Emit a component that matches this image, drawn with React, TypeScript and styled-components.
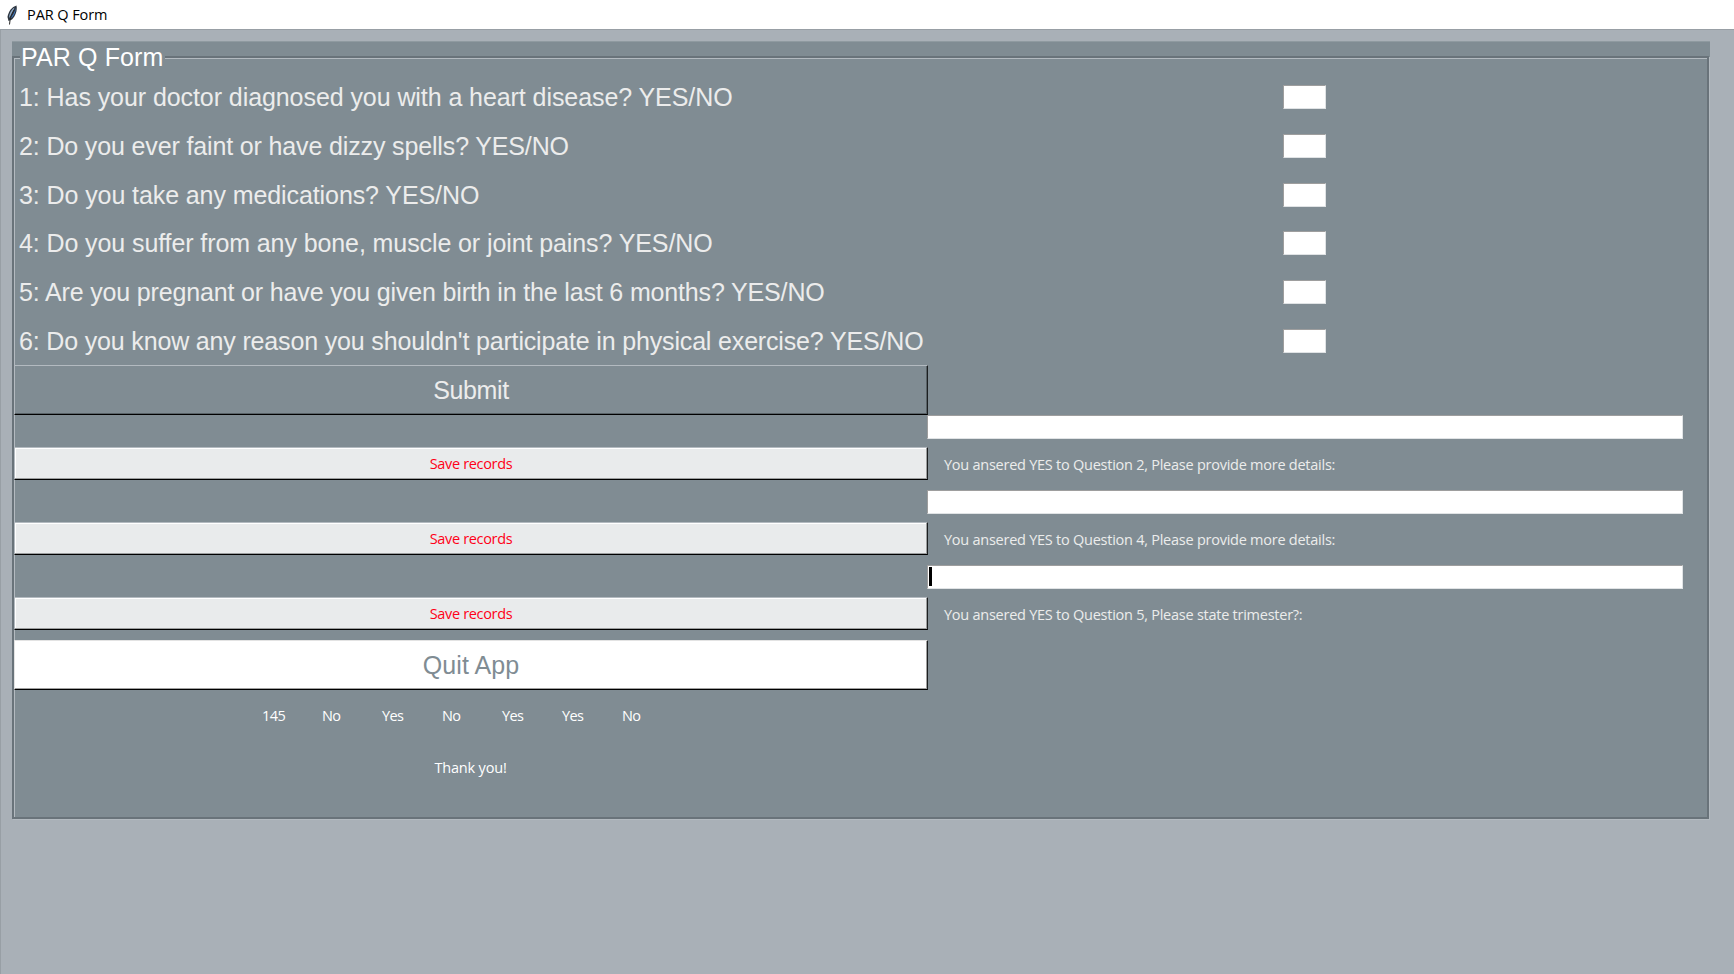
import React from "react";
import styled, { createGlobalStyle } from "styled-components";

const Global = createGlobalStyle`
  * { box-sizing: border-box; }
  body { margin: 0; background: #a9b0b7; overflow: hidden; }
`;

const Window = styled.div`
  width: 1734px;
  height: 974px;
  display: flex;
  flex-direction: column;
  background: #a9b0b7;
  color: #ececec;
  white-space: nowrap;
`;

const TitleBar = styled.header`
  height: 29px;
  flex: none;
  display: flex;
  align-items: center;
  gap: 7px;
  padding-left: 6px;
  background: #fff;
  color: #000;
  font: 14.5px/29px "Open Sans", "Noto Sans", sans-serif;
  letter-spacing: -0.08px;
`;

const Client = styled.main`
  flex: 1;
  border-top: 1px solid #989fa5;
  border-left: 1px solid #989fa5;
  padding: 11px 24px 0 11px;
`;

const Panel = styled.section`
  position: relative;
  height: 778px;
  padding-top: 14px;
  background: #808c93;
  border-top: 1px solid #8f9aa0;
`;

const Legend = styled.h1`
  position: absolute;
  top: 0;
  left: 8px;
  margin: 0;
  padding: 0 1px;
  background: #808c93;
  color: #fff;
  font: 25px/30px "Liberation Sans", Arial, sans-serif;
  letter-spacing: 0.13px;
`;

const Groove = styled.div`
  height: 763px;
  margin-right: 1px;
  padding-top: 15px;
  border: 2px solid #69737a;
  box-shadow: inset 1px 1px #b3bac0, 1px 1px #b3bac0;
`;

const Question = styled.div<{ $spacing: number }>`
  height: 48.67px;
  display: grid;
  grid-template-columns: 1269px 43px;
  align-items: center;

  span {
    padding-left: 5px;
    font: 25px/30px "Liberation Sans", Arial, sans-serif;
    letter-spacing: ${(p) => p.$spacing}px;
  }
`;

const Entry = styled.div`
  height: 24px;
  display: flex;
  align-items: center;
  background: #fff;
  border: 1px solid #9e9e9e;
  border-right-color: #e0e3e5;
  border-bottom-color: #e0e3e5;
`;

const Caret = styled.i`
  width: 3px;
  height: 19px;
  margin-left: 1px;
  background: #000;
`;

const Button = styled.button<{ $tone: "panel" | "light" | "white"; $spacing: number }>`
  display: block;
  width: 914px;
  height: ${(p) => (p.$tone === "light" ? 33 : 50)}px;
  margin: 0;
  padding: 0;
  border: 1px solid ${(p) => (p.$tone === "white" ? "#e3e3e3" : "#b3bac0")};
  border-right: 1px solid #1c1f20;
  border-bottom: 1px solid #000;
  border-radius: 0;
  background: ${(p) => ({ panel: "#808c93", light: "#e9ebec", white: "#fff" })[p.$tone]};
  box-shadow: inset -1px -1px
    ${(p) => ({ panel: "#596267", light: "#9c9e9f", white: "#a0a0a0" })[p.$tone]}
    ${(p) => (p.$tone === "light" ? ", inset 1px 1px #fff" : "")};
  color: ${(p) => ({ panel: "#ececec", light: "#ff0018", white: "#808c93" })[p.$tone]};
  font: ${(p) =>
    p.$tone === "light"
      ? '14.5px/29px "Open Sans", "Noto Sans", sans-serif'
      : '25px/46px "Liberation Sans", Arial, sans-serif'};
  letter-spacing: ${(p) => p.$spacing}px;
`;

const Detail = styled.div`
  height: 75px;
  display: grid;
  grid-template-columns: 913px 756px;
  grid-template-rows: 24px 33px;
  row-gap: 8px;

  ${Entry} { grid-column: 2; }
`;

const Note = styled.span`
  padding-left: 17px;
  font: 14.5px/36px "Open Sans", "Noto Sans", sans-serif;
  letter-spacing: -0.25px;
`;

const Results = styled.div`
  height: 52px;
  display: grid;
  grid-template-columns: repeat(7, 60px);
  padding-left: 248px;
  font: 14.5px/52px "Open Sans", "Noto Sans", sans-serif;
  letter-spacing: -0.6px;
  color: #fff;
`;

const Thanks = styled.div`
  width: 913px;
  text-align: center;
  font: 14.5px/51px "Open Sans", "Noto Sans", sans-serif;
  letter-spacing: -0.17px;
  color: #fff;
`;

const questions: [string, number][] = [
  ["1: Has your doctor diagnosed you with a heart disease? YES/NO", -0.073],
  ["2: Do you ever faint or have dizzy spells? YES/NO", -0.14],
  ["3: Do you take any medications? YES/NO", -0.09],
  ["4: Do you suffer from any bone, muscle or joint pains? YES/NO", -0.096],
  ["5: Are you pregnant or have you given birth in the last 6 months? YES/NO", -0.154],
  ["6: Do you know any reason you shouldn't participate in physical exercise? YES/NO", -0.161],
];

const details = [
  "You ansered YES to Question 2, Please provide more details:",
  "You ansered YES to Question 4, Please provide more details:",
  "You ansered YES to Question 5, Please state trimester?:",
];

const results = ["145", "No", "Yes", "No", "Yes", "Yes", "No"];

const Feather = () => (
  <svg width="14" height="22" viewBox="0 0 14 22">
    <path d="M10.5 1.5 C6 3 2.5 7 1.5 13 L2.5 17 L6 15.5 C9.500 12 11.500 6.500 10.500 1.500Z" fill="#2b333d" />
    <path d="M8.500 3.500 C5.500 5.500 3 9.500 3 14 C5.500 10.500 7.500 7 8.500 3.500Z" fill="#8fa9c4" />
    <path d="M9.700 3.500 C9 8 6.500 12 4 14.500 L6 13.500 C8.500 11 10 7 9.700 3.500Z" fill="#3f78bd" />
    <path d="M8 6 C5.500 10 4 14 3.500 20.500" fill="none" stroke="#252525" strokeWidth="1" />
  </svg>
);

export default function App() {
  return (
    <Window>
      <Global />
      <TitleBar>
        <Feather />
        PAR Q Form
      </TitleBar>
      <Client>
        <Panel>
          <Groove>
            {questions.map(([text, spacing]) => (
              <Question key={text} $spacing={spacing}>
                <span>{text}</span>
                <Entry />
              </Question>
            ))}
            <Button $tone="panel" $spacing={-0.35}>Submit</Button>
            {details.map((text, i) => (
              <Detail key={text}>
                <Entry>{i === 2 && <Caret />}</Entry>
                <Button $tone="light" $spacing={-0.33}>Save records</Button>
                <Note>{text}</Note>
              </Detail>
            ))}
            <Button $tone="white" $spacing={0.06}>Quit App</Button>
            <Results>
              {results.map((r, i) => (
                <span key={i}>{r}</span>
              ))}
            </Results>
            <Thanks>Thank you!</Thanks>
          </Groove>
          <Legend>PAR Q Form</Legend>
        </Panel>
      </Client>
    </Window>
  );
}
